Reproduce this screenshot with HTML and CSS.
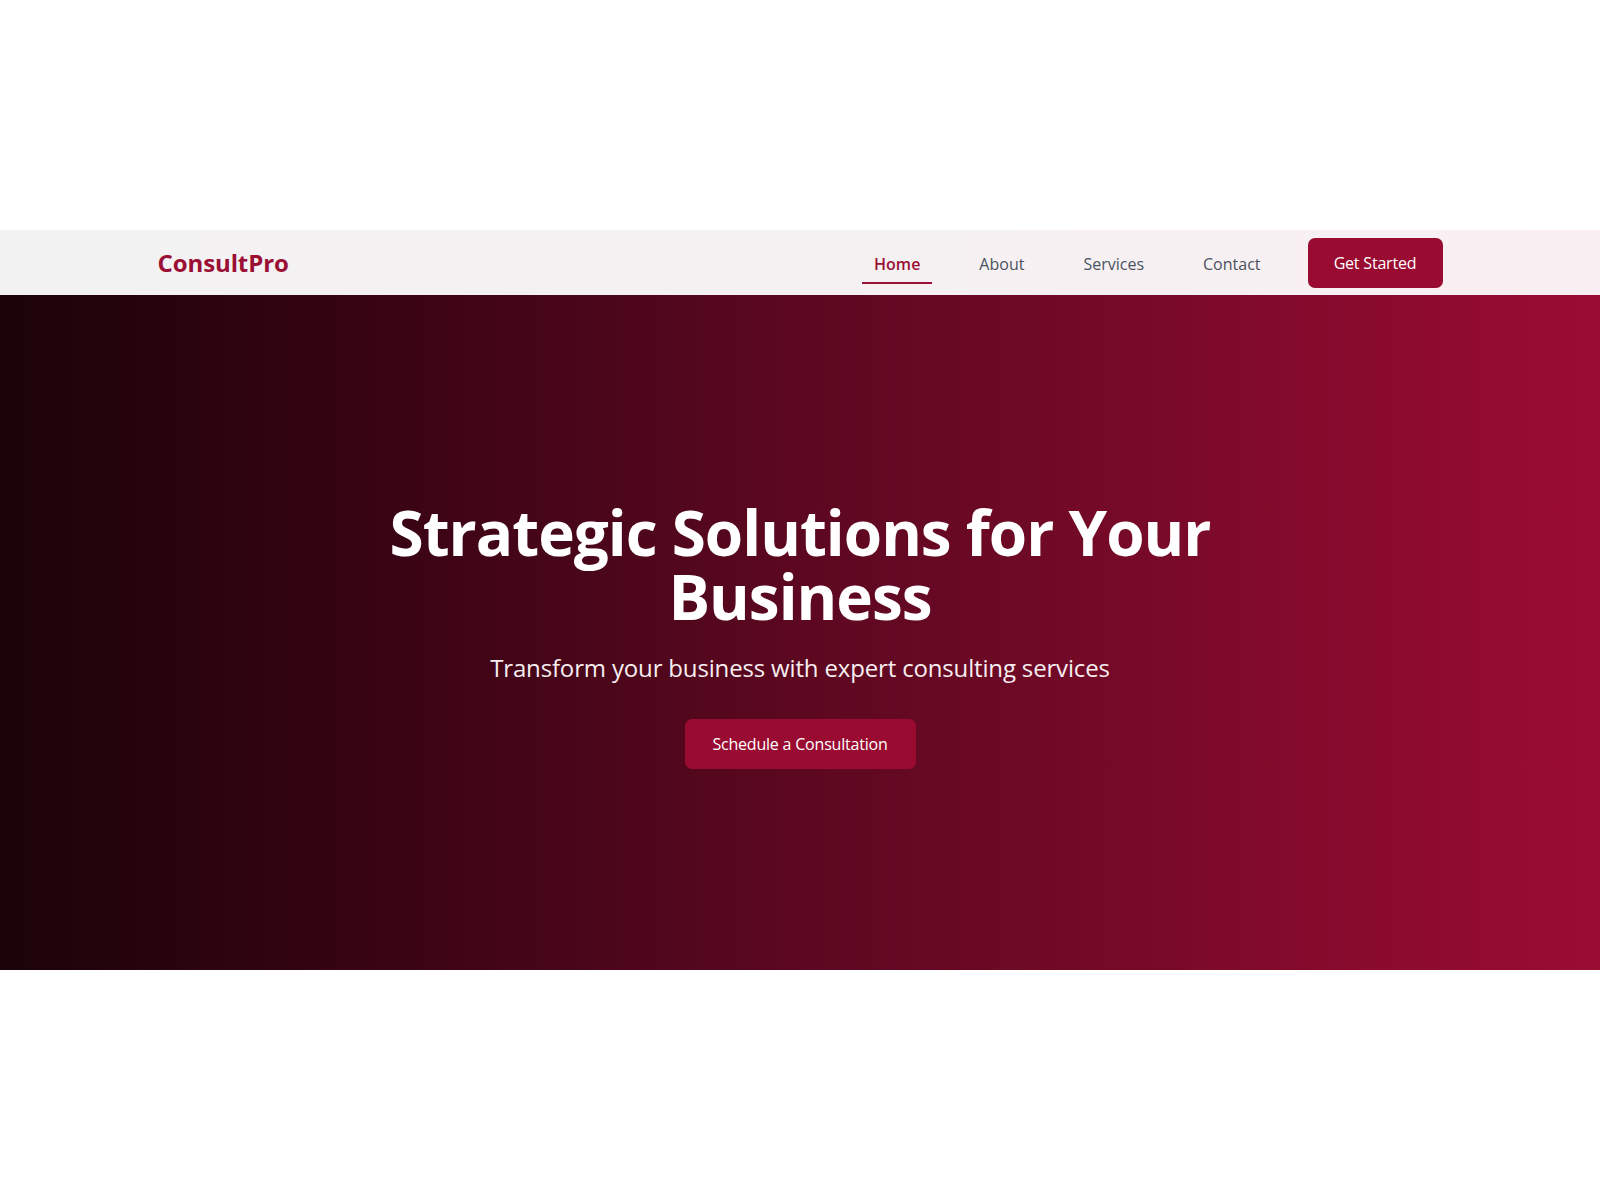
FILE: index.html
```html
<!DOCTYPE html>
<html lang="en">
<head>
<meta charset="utf-8">
<title>ConsultPro</title>
<link rel="stylesheet" href="styles.css">
</head>
<body>
<div class="page">
  <header class="nav">
    <div class="nav-inner">
      <a class="logo" href="#">ConsultPro</a>
      <nav class="menu">
        <a class="menu-link active" href="#">Home</a>
        <a class="menu-link" href="#">About</a>
        <a class="menu-link" href="#">Services</a>
        <a class="menu-link" href="#">Contact</a>
        <a class="btn btn-nav" href="#">Get Started</a>
      </nav>
    </div>
  </header>
  <section class="hero">
    <h1 class="hero-title">Strategic Solutions for Your<br>Business</h1>
    <p class="hero-sub">Transform your business with expert consulting services</p>
    <a class="btn btn-hero" href="#">Schedule a Consultation</a>
  </section>
</div>
</body>
</html>
```
FILE: styles.css
```css
* { box-sizing: border-box; }
html, body { margin: 0; padding: 0; }
body {
  font-family: "Open Sans", "Noto Sans", sans-serif;
  background: #ffffff;
  min-height: 100vh;
  display: flex;
  flex-direction: column;
  justify-content: center;
}
a { text-decoration: none; }

.page { width: 100%; }

.nav {
  height: 65px;
  background: linear-gradient(to right, #f3f2f3 0%, #f5f1f2 50%, #f9eff2 100%);
  display: flex;
  align-items: center;
}
.nav-inner {
  width: 1285px;
  margin: 0 auto;
  display: flex;
  align-items: center;
  justify-content: space-between;
}
.logo {
  font-size: 24px;
  font-weight: 700;
  color: #9a0f33;
  letter-spacing: -0.1px;
  line-height: 32px;
}
.menu {
  display: flex;
  align-items: center;
  gap: 35px;
}
.menu-link {
  display: block;
  padding: 10px 12px 6px;
  line-height: 24px;
  font-size: 16px;
  color: #4a5261;
  border-bottom: 2px solid transparent;
  letter-spacing: 0;
}
.menu-link.active {
  color: #9b1034;
  font-weight: 600;
  border-bottom-color: #9b1034;
}
.btn {
  display: inline-flex;
  align-items: center;
  justify-content: center;
  height: 50px;
  background: #990b31;
  color: #ffffff;
  border-radius: 7px;
  font-size: 16px;
  font-weight: 500;
  letter-spacing: -0.2px;
}
.btn-nav { width: 135px; }

.hero {
  height: 675px;
  background: linear-gradient(to right, #1b0309 0%, #3a0414 25%, #5c0820 50%, #7c0a2a 75%, #9b0c33 100%);
  display: flex;
  flex-direction: column;
  align-items: center;
  justify-content: center;
  text-align: center;
  color: #ffffff;
  padding-top: 4px;
}
.hero-title {
  margin: 0;
  font-size: 62px;
  line-height: 64px;
  font-weight: 700;
  letter-spacing: -1px;
}
.hero-sub {
  margin: 22px 0 33px;
  font-size: 24px;
  line-height: 36px;
  letter-spacing: -0.16px;
  color: #f6eef0;
}
.btn-hero { width: 231px; }
```
